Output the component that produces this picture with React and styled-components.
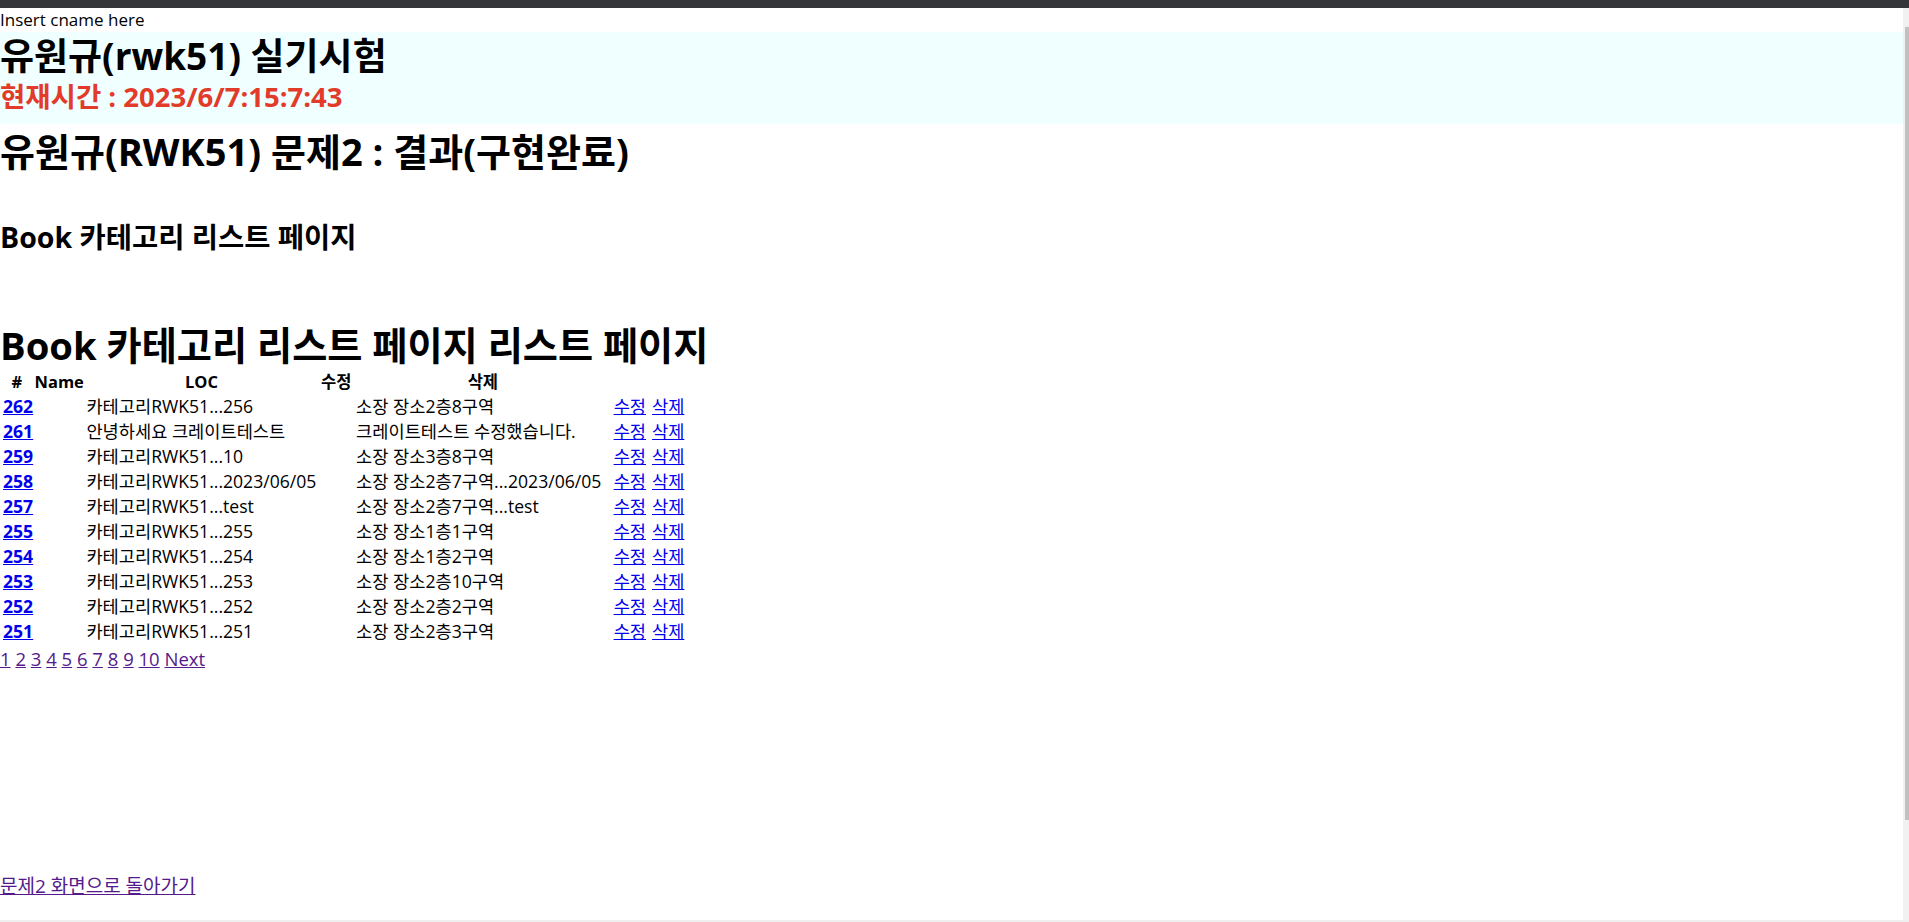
import React from 'react';
import styled, { createGlobalStyle } from 'styled-components';

const GlobalStyle = createGlobalStyle`
  html, body {
    margin: 0;
    padding: 0;
    overflow: hidden;
  }
  body {
    font-family: "Open Sans", "Noto Sans CJK KR", sans-serif;
    font-size: 17.6px;
    color: #000;
    background: #fff;
  }
`;

const Frame = styled.div`
  display: flex;
  flex-direction: column;
  height: 100vh;
`;

const TopBar = styled.div`
  height: 8px;
  flex: none;
  background: #35363a;
`;

const Viewport = styled.div`
  flex: 1;
  display: flex;
  min-height: 0;
`;

const BottomEdge = styled.div`
  height: 2px;
  flex: none;
  background: #efefef;
`;

const Page = styled.div`
  flex: 1;
  overflow: hidden;
  display: flex;
  flex-direction: column;
  align-items: stretch;
`;

const Scrollbar = styled.div`
  width: 6px;
  flex: none;
  background: #f1f1f1;
  display: flex;
  flex-direction: column;
  padding-top: 19px;
  padding-bottom: 100px;
`;

const Thumb = styled.div`
  flex: 1;
  margin-left: 2px;
  background: #c1c1c1;
`;

const Cname = styled.div`
  line-height: 24px;
  font-size: 17px;
`;

const Banner = styled.div`
  background: #f0ffff;
  padding-bottom: 10px;
`;

const Title = styled.h1`
  margin: ${(p) => p.$mt || 0}px 0 0;
  font-size: ${(p) => p.$fs || 37}px;
  line-height: ${(p) => p.$lh || 48}px;
  font-weight: bold;
  white-space: nowrap;
`;

const Clock = styled.div`
  color: #e33b2a;
  font-size: 27.5px;
  line-height: 34px;
  font-weight: bold;
`;

const SubTitle = styled.h3`
  margin: 49px 0 0;
  font-size: 28.5px;
  line-height: 26px;
  font-weight: bold;
`;

const Table = styled.table`
  align-self: flex-start;
  width: 690px;
  table-layout: fixed;
  border-spacing: 2px;
  margin: 0;
  font-size: 17.6px;
`;

const Col = styled.col`
  width: ${(p) => p.$w}px;
`;

const Th = styled.th`
  padding: 1px;
  line-height: 21px;
  font-size: 16.5px;
  font-weight: bold;
  text-align: center;
  white-space: nowrap;
  overflow: visible;
`;

const Td = styled.td`
  padding: 1px;
  line-height: 21px;
  white-space: nowrap;
  overflow: visible;
`;

const IdLink = styled.a`
  color: #0000ee;
  font-weight: bold;
  text-decoration: underline;
`;

const ActionLink = styled.a`
  color: #0000ee;
  text-decoration: underline;
  margin-right: ${(p) => p.$gap || 0}px;
`;

const Pager = styled.div`
  margin-top: 2px;
  line-height: 24px;
  font-size: 18.5px;
`;

const PageLink = styled.a`
  color: #551a8b;
  text-decoration: underline;
`;

const BackLink = styled.a`
  align-self: flex-start;
  margin-top: 203px;
  line-height: 24px;
  font-size: 19px;
  color: #551a8b;
  text-decoration: underline;
`;

const rows = [
  { id: 262, name: '카테고리RWK51...256', loc: '소장 장소2층8구역' },
  { id: 261, name: '안녕하세요 크레이트테스트', loc: '크레이트테스트 수정했습니다.' },
  { id: 259, name: '카테고리RWK51...10', loc: '소장 장소3층8구역' },
  { id: 258, name: '카테고리RWK51...2023/06/05', loc: '소장 장소2층7구역...2023/06/05' },
  { id: 257, name: '카테고리RWK51...test', loc: '소장 장소2층7구역...test' },
  { id: 255, name: '카테고리RWK51...255', loc: '소장 장소1층1구역' },
  { id: 254, name: '카테고리RWK51...254', loc: '소장 장소1층2구역' },
  { id: 253, name: '카테고리RWK51...253', loc: '소장 장소2층10구역' },
  { id: 252, name: '카테고리RWK51...252', loc: '소장 장소2층2구역' },
  { id: 251, name: '카테고리RWK51...251', loc: '소장 장소2층3구역' },
];

const pages = [1, 2, 3, 4, 5, 6, 7, 8, 9, 10];

export default function App() {
  return (
    <Frame>
      <GlobalStyle />
      <TopBar />
      <Viewport>
        <Page>
          <Cname>Insert cname here</Cname>
          <Banner>
            <Title>유원규(rwk51) 실기시험</Title>
            <Clock>현재시간 : 2023/6/7:15:7:43</Clock>
          </Banner>
          <Title $mt={3} $fs={38}>유원규(RWK51) 문제2 : 결과(구현완료)</Title>
          <SubTitle>Book 카테고리 리스트 페이지</SubTitle>
          <Title $mt={72} $lh={46} $fs={38.2}>Book 카테고리 리스트 페이지 리스트 페이지</Title>
          <Table>
            <colgroup>
              <Col $w={29} />
              <Col $w={49} />
              <Col $w={228} />
              <Col $w={33} />
              <Col $w={251} />
              <Col $w={74} />
            </colgroup>
            <thead>
              <tr>
                <Th>#</Th>
                <Th>Name</Th>
                <Th>LOC</Th>
                <Th>수정</Th>
                <Th>삭제</Th>
                <Th />
              </tr>
            </thead>
            <tbody>
              {rows.map((r) => (
                <tr key={r.id}>
                  <Td><IdLink href="#">{r.id}</IdLink></Td>
                  <Td />
                  <Td>{r.name}</Td>
                  <Td />
                  <Td>{r.loc}</Td>
                  <Td>
                    <ActionLink href="#" $gap={6}>수정</ActionLink>
                    <ActionLink href="#">삭제</ActionLink>
                  </Td>
                </tr>
              ))}
            </tbody>
          </Table>
          <Pager>
            {pages.map((n) => (
              <React.Fragment key={n}>
                <PageLink href="#">{n}</PageLink>{' '}
              </React.Fragment>
            ))}
            <PageLink href="#">Next</PageLink>
          </Pager>
          <BackLink href="#">문제2 화면으로 돌아가기</BackLink>
        </Page>
        <Scrollbar>
          <Thumb />
        </Scrollbar>
      </Viewport>
      <BottomEdge />
    </Frame>
  );
}
